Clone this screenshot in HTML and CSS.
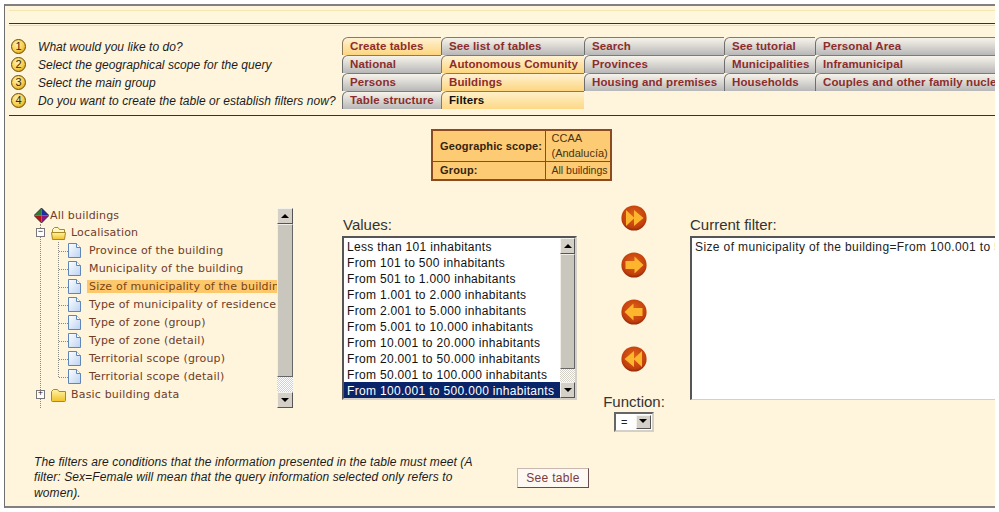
FILE: index.html
```html
<!DOCTYPE html>
<html lang="en">
<head>
<meta charset="utf-8">
<title>Create tables - Filters</title>
<link rel="stylesheet" href="styles.css">
</head>
<body>
<svg class="defs" width="0" height="0" aria-hidden="true">
  <defs>
    <linearGradient id="doc" x1="0" y1="0" x2="1" y2="1"><stop offset="0" stop-color="#ffffff"/><stop offset="1" stop-color="#bcd2f2"/></linearGradient>
    <linearGradient id="fold" x1="0" y1="0" x2="0" y2="1"><stop offset="0" stop-color="#fff3a8"/><stop offset="1" stop-color="#f2c228"/></linearGradient>
    <radialGradient id="ball" cx="50%" cy="40%" r="60%"><stop offset="0" stop-color="#e0621a"/><stop offset=".8" stop-color="#c23f0c"/><stop offset="1" stop-color="#8f2a08"/></radialGradient>
    <symbol id="i-doc" viewBox="0 0 13 15"><path d="M.5.5H8.5L12.5 4.5V14.5H.5Z" fill="url(#doc)" stroke="#5f86b8"/><path d="M8.5.5V4.5H12.5" fill="#fff" stroke="#5f86b8"/></symbol>
    <symbol id="i-folder" viewBox="0 0 16 14"><path d="M.5 12.5V3.5L2.5 1.5H6.5L8 3.5H14.5V12.5Q14.5 13.5 13.5 13.5H1.5Q.5 13.5 .5 12.5Z" fill="url(#fold)" stroke="#a8892a"/></symbol>
    <symbol id="i-open" viewBox="0 0 16 14"><path d="M1.5 12.5V3.5L3.5 1.5H7L8.5 3.5H13.5V6" fill="#fff6c0" stroke="#a8892a"/><path d="M1.5 13.5L.5 6.5H14.5L13.5 13.5Z" fill="url(#fold)" stroke="#a8892a"/></symbol>
    <symbol id="i-ball" viewBox="0 0 26 26"><circle cx="13" cy="13" r="12.6" fill="url(#ball)"/></symbol>
  </defs>
</svg>

<div class="frame">
  <div class="band"></div>

  <div class="wizard">
    <div class="step"><span class="num">1</span><em>What would you like to do?</em></div>
    <a class="tab on">Create tables</a><a class="tab">See list of tables</a><a class="tab">Search</a><a class="tab">See tutorial</a><a class="tab">Personal Area</a>

    <div class="step"><span class="num">2</span><em>Select the geographical scope for the query</em></div>
    <a class="tab">National</a><a class="tab on">Autonomous Comunity</a><a class="tab">Provinces</a><a class="tab">Municipalities</a><a class="tab">Inframunicipal</a>

    <div class="step"><span class="num">3</span><em>Select the main group</em></div>
    <a class="tab">Persons</a><a class="tab on">Buildings</a><a class="tab">Housing and premises</a><a class="tab">Households</a><a class="tab">Couples and other family nucleus</a>

    <div class="step"><span class="num">4</span><em>Do you want to create the table or establish filters now?</em></div>
    <a class="tab">Table structure</a><a class="tab active">Filters</a>
  </div>

  <table class="scope">
    <tr class="r1"><th>Geographic scope:</th><td class="wide">CCAA<br>(Andalucía)</td></tr>
    <tr class="r2"><th>Group:</th><td>All buildings</td></tr>
  </table>

  <div class="main">
    <div class="tree-panel">
      <div class="tree">
        <div class="root">
          <svg class="diamond" width="15" height="15" viewBox="0 0 15 15"><path d="M7.5 0L7.5 7.5H0Z" fill="#2f7a3a"/><path d="M7.5 0L15 7.5H7.5Z" fill="#1c2f9a"/><path d="M0 7.5H7.5V15Z" fill="#b01818"/><path d="M7.5 7.5H15L7.5 15Z" fill="#8a1a80"/><path d="M7.5 0L15 7.5L7.5 15L0 7.5Z" fill="none" stroke="#111" stroke-width=".7"/></svg>
          <span>All buildings</span>
        </div>
        <ul class="lvl1">
          <li>
            <div class="row"><span class="box">−</span><svg class="ico-f" width="16" height="14"><use href="#i-open"/></svg><span class="lbl">Localisation</span></div>
            <ul class="lvl2">
              <li class="row leaf"><svg class="ico-d" width="13" height="15"><use href="#i-doc"/></svg><span class="lbl">Province of the building</span></li>
              <li class="row leaf"><svg class="ico-d" width="13" height="15"><use href="#i-doc"/></svg><span class="lbl">Municipality of the building</span></li>
              <li class="row leaf"><svg class="ico-d" width="13" height="15"><use href="#i-doc"/></svg><span class="lbl sel">Size of municipality of the building</span></li>
              <li class="row leaf"><svg class="ico-d" width="13" height="15"><use href="#i-doc"/></svg><span class="lbl">Type of municipality of residence</span></li>
              <li class="row leaf"><svg class="ico-d" width="13" height="15"><use href="#i-doc"/></svg><span class="lbl">Type of zone (group)</span></li>
              <li class="row leaf"><svg class="ico-d" width="13" height="15"><use href="#i-doc"/></svg><span class="lbl">Type of zone (detail)</span></li>
              <li class="row leaf"><svg class="ico-d" width="13" height="15"><use href="#i-doc"/></svg><span class="lbl">Territorial scope (group)</span></li>
              <li class="row leaf"><svg class="ico-d" width="13" height="15"><use href="#i-doc"/></svg><span class="lbl">Territorial scope (detail)</span></li>
            </ul>
          </li>
          <li><div class="row"><span class="box">+</span><svg class="ico-f" width="16" height="14"><use href="#i-folder"/></svg><span class="lbl">Basic building data</span></div></li>
          <li><div class="row peek"><svg class="ico-f" width="16" height="14"><use href="#i-folder"/></svg></div></li>
        </ul>
      </div>
      <div class="sbar">
        <span class="sbtn up"></span><span class="thumb t-tree"></span><span class="dither"></span><span class="sbtn down"></span>
      </div>
    </div>

    <div class="values">
      <div class="cap">Values:</div>
      <div class="listbox">
        <ul class="opts">
          <li>Less than 101 inhabitants</li>
          <li>From 101 to 500 inhabitants</li>
          <li>From 501 to 1.000 inhabitants</li>
          <li>From 1.001 to 2.000 inhabitants</li>
          <li>From 2.001 to 5.000 inhabitants</li>
          <li>From 5.001 to 10.000 inhabitants</li>
          <li>From 10.001 to 20.000 inhabitants</li>
          <li>From 20.001 to 50.000 inhabitants</li>
          <li>From 50.001 to 100.000 inhabitants</li>
          <li class="picked">From 100.001 to 500.000 inhabitants</li>
        </ul>
        <div class="sbar small">
          <span class="sbtn up"></span><span class="thumb t-list"></span><span class="dither"></span><span class="sbtn down"></span>
        </div>
      </div>
    </div>

    <div class="actions">
      <svg class="act" width="26" height="26" viewBox="0 0 26 26"><use href="#i-ball"/><path d="M5 5L13.5 13L5 21ZM13 5L22.5 13L13 21Z" fill="#fdb52e"/></svg>
      <svg class="act" width="26" height="26" viewBox="0 0 26 26"><use href="#i-ball"/><path d="M4.5 9H13.5V4.5L22.5 13L13.5 21.5V17H4.5Z" fill="#fdb52e"/></svg>
      <svg class="act" width="26" height="26" viewBox="0 0 26 26"><use href="#i-ball"/><path d="M21.5 9H12.5V4.5L3.5 13L12.5 21.5V17H21.5Z" fill="#fdb52e"/></svg>
      <svg class="act" width="26" height="26" viewBox="0 0 26 26"><use href="#i-ball"/><path d="M21 5L12.5 13L21 21ZM13 5L3.5 13L13 21Z" fill="#fdb52e"/></svg>
      <div class="fn">
        <div class="cap fn-cap">Function:</div>
        <div class="combo"><span class="combo-val">=</span><span class="sbtn down"></span></div>
      </div>
    </div>

    <div class="filter-col">
      <div class="cap">Current filter:</div>
      <div class="filterbox">Size of municipality of the building=From 100.001 to 500.000 inhabitants</div>
    </div>
  </div>

  <div class="foot">
    <p class="note">The filters are conditions that the information presented in the table must meet (A filter: Sex=Female will mean that the query information selected only refers to women).</p>
    <button class="see" type="button">See table</button>
  </div>
</div>
</body>
</html>
```

FILE: styles.css
```css
* { box-sizing: border-box; }
html, body { margin: 0; padding: 0; background: #fff; }
body { padding: 4px 4px 0 4px; width: 999px; height: 512px; overflow: hidden; font-family: "Liberation Sans", Arial, sans-serif; font-size: 12px; color: #222; }
.defs { position: absolute; }
ul { list-style: none; margin: 0; padding: 0; }

.frame { width: 991px; height: 504px; background: #fef5dc; border-top: 2px solid #808080; border-bottom: 2px solid #808080; border-left: 1px solid #6f6f6f; overflow: hidden; }

.band { margin-left: 4px; margin-top: 4px; height: 16px; border-top: 1px solid #f3e6ae; border-bottom: 1px solid #f0d9b8; background: #fff6de; }
.band::after { content: ""; display: block; height: 1px; margin-top: 12px; background: #4a2c1c; }

.wizard { margin-left: 4px; margin-top: 11px; padding-bottom: 5px; height: 79px; border-bottom: 1px solid #4a2c1c; display: grid; grid-template-columns: 333px 99px 143px 140px 91px 180px; grid-auto-rows: 18px; }
.step { display: flex; align-items: center; padding-left: 2px; gap: 12px; white-space: nowrap; color: #1c1c1c; }
.step em { font-size: 12px; letter-spacing: .05px; padding-top: 1px; }
.num { width: 15px; height: 15px; flex: none; border-radius: 50%; border: 1px solid #6b4a08; background: radial-gradient(circle at 40% 35%, #fff3b8, #f8cd48 55%, #c08208); font-size: 11px; line-height: 13px; text-align: center; color: #3a2a05; }

.tab { display: block; padding: 0 0 0 7px; font-weight: bold; font-size: 11.5px; line-height: 16px; letter-spacing: .1px; color: #8c2d2d; white-space: nowrap; overflow: hidden; border-left: 1px solid #6e6e6e; border-top: 1px solid #807a70; border-top-left-radius: 6px; background: linear-gradient(#f6f3ea, #e8e5de 25%, #b8b8b8); }
.tab.on { background: linear-gradient(#fff2d2, #fdd57f); border-left-color: #8b7a55; }
.tab.active { background: linear-gradient(#fff0c8, #fdd887); color: #111; border-left-color: #8b7a55; }

.scope { margin: 13px 0 0 426px; width: 181px; height: 51px; table-layout: fixed; border: 2px solid #8b4a1f; border-collapse: collapse; background: #fdcb74; }
.r1 { height: 31px; }
.r2 { height: 18px; }
.scope th { width: 113px; text-align: left; font-size: 11px; padding: 0 0 0 7px; color: #33240f; border: 1px solid #8b4a1f; border-left: 0; white-space: nowrap; letter-spacing: .15px; }
.scope td { font-size: 10.5px; line-height: 15px; padding: 0 0 0 6px; color: #4a3213; border: 1px solid #8b4a1f; border-right: 0; white-space: nowrap; }
.scope td.wide { font-size: 11px; }

.main { display: flex; align-items: flex-start; margin-top: 27px; margin-left: 25px; height: 247px; }

.tree-panel { display: flex; width: 263px; height: 200px; flex: none; }
.tree { width: 247px; height: 200px; overflow: hidden; font-family: "DejaVu Sans", Verdana, sans-serif; font-size: 11px; letter-spacing: .18px; color: #6e3c2a; }
.root { height: 16px; display: flex; align-items: center; padding-left: 4px; gap: 1px; white-space: nowrap; }
.diamond { flex: none; }
.lvl1 { margin-left: 10px; border-left: 1px dotted #8a8a80; }
.lvl1 > li > .row { position: relative; left: -5px; }
.row { height: 18px; display: flex; align-items: center; white-space: nowrap; }
.box { width: 9px; height: 9px; flex: none; border: 1px solid #777; background: #fff; font: 9px/7px "Liberation Mono", monospace; color: #222; text-align: center; overflow: hidden; }
.ico-f { flex: none; margin-left: 6px; }
.peek { padding-left: 9px; }
.peek .ico-f { margin: 12px 0 0; }
.lbl { margin-left: 2px; padding: 0 2px; }
.lvl2 { margin-left: 17px; border-left: 1px dotted #8a8a80; height: 135px; margin-bottom: 9px; }
.leaf { padding-left: 9px; background: repeating-linear-gradient(90deg, #8a8a80 0 1px, transparent 1px 2px) 0 9px / 9px 1px no-repeat; }
.ico-d { flex: none; }
.leaf .lbl { margin-left: 6px; }
.lbl.sel { background: #fdc86c; color: #7a4418; width: 191px; overflow: hidden; flex: none; }

.sbar { width: 16px; height: 200px; flex: none; display: flex; flex-direction: column; }
.sbar.small { width: 15px; height: 160px; }
.sbtn { display: block; width: 16px; height: 16px; flex: none; background: #d4d0c8; border: 1px solid; border-color: #f4f2ec #555 #555 #f4f2ec; position: relative; }
.sbar.small .sbtn { width: 15px; }
.sbtn::after { content: ""; position: absolute; left: 3px; border: 4px solid transparent; }
.sbtn.up::after { top: 1px; border-bottom-color: #000; }
.sbtn.down::after { top: 5px; border-top-color: #000; }
.thumb { display: block; flex: none; width: 100%; background: #c9c6be; border: 1px solid; border-color: #f0eee8 #666 #666 #f0eee8; }
.t-tree { height: 153px; }
.t-list { height: 115px; }
.dither { display: block; flex: 1; background: repeating-conic-gradient(#d4d0c8 0 25%, #fff 0 50%) 0 0 / 2px 2px; }

.values { width: 235px; margin-left: 49px; flex: none; }
.cap { font-size: 15px; line-height: 18px; color: #333; }
.values .cap { margin-top: 8px; padding-left: 1px; height: 20px; }
.listbox { display: flex; height: 164px; border: 2px solid; border-color: #555 #d4d0c8 #d4d0c8 #555; background: #fff; }
.opts { flex: 1; min-width: 0; }
.opts li { height: 16px; line-height: 16px; padding: 1px 0 0 3px; color: #111; white-space: nowrap; letter-spacing: .32px; overflow: hidden; }
.opts .picked { background: #0a246a; color: #fff; }

.actions { width: 62px; margin-left: 26px; margin-top: -3px; flex: none; display: flex; flex-direction: column; align-items: center; gap: 21px; }
.fn { display: flex; flex-direction: column; align-items: center; width: 100%; }
.fn-cap { white-space: nowrap; }
.combo { display: flex; width: 40px; height: 20px; margin-top: 1px; padding: 1px; background: #fff; border: 2px solid; border-color: #666 #d4d0c8 #d4d0c8 #666; }
.combo-val { flex: 1; padding-left: 4px; font-size: 11px; line-height: 15px; }
.combo .sbtn { width: 15px; height: 14px; }
.combo .sbtn::after { left: 2px; top: 3px; }

.filter-col { flex: none; width: 320px; margin-left: 25px; }
.filter-col .cap { margin-top: 8px; height: 20px; }
.filterbox { height: 164px; padding: 1px 0 0 3px; background: #fff; border: 2px solid; border-color: #555 transparent #d4d0c8 #555; border-bottom-width: 1px; line-height: 16px; white-space: nowrap; overflow: hidden; color: #222; letter-spacing: .38px; }

.foot { display: flex; align-items: flex-start; margin-left: 29px; }
.note { margin: 0; width: 445px; font-style: italic; font-size: 12px; letter-spacing: .1px; line-height: 15.5px; color: #1c1c1c; }
.see { margin: 13px 0 0 38px; width: 72px; height: 20px; padding: 0; background: #fdf8f2; border: 1px solid; border-color: #c8b8b0 #6a4a4a #6a4a4a #c8b8b0; font: 12px "Liberation Sans", Arial, sans-serif; letter-spacing: .3px; color: #7a3c3c; }
```
